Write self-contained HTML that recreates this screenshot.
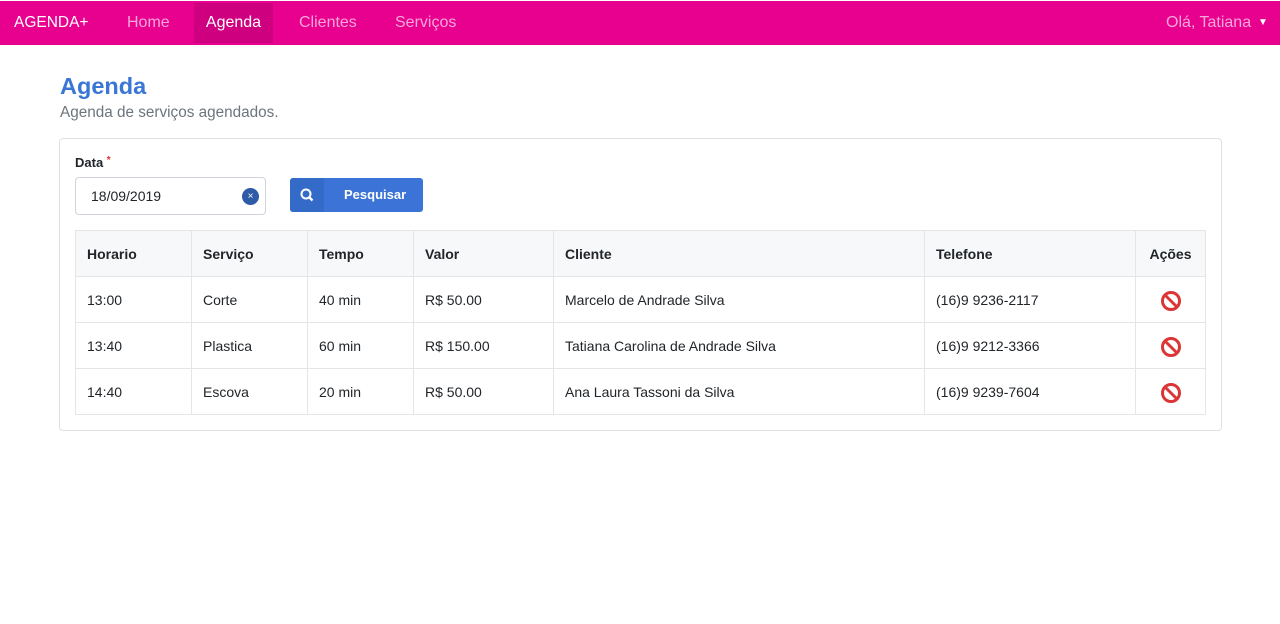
<!DOCTYPE html>
<html><head><meta charset="utf-8"><style>
*{box-sizing:border-box;margin:0;padding:0}
body{width:1280px;height:624px;background:#fff;font-family:"Liberation Sans",sans-serif;position:relative;overflow:hidden;color:#212529}
.nav{position:absolute;top:1px;left:0;width:1280px;height:44px;background:#e8008e}
.nav span{position:absolute;top:0;line-height:44px;font-size:16px;color:#f7a6d8}
.nav .brand{color:#fff;left:14px;font-size:15.5px}
.nav .act{left:194px;width:79px;text-align:center;background:#cf0080;color:#fff;height:40px;top:2px;line-height:40px}
h1{position:absolute;left:60px;top:73px;font-size:23.5px;color:#3a76d6;font-weight:bold}
.sub{position:absolute;left:60px;top:104px;font-size:15.3px;color:#6c757d}
.card{position:absolute;left:59px;top:138px;width:1163px;height:293px;border:1px solid #dfe1e4;border-radius:4px}
.lbl{position:absolute;left:75px;top:155px;font-size:13px;font-weight:bold}
.lbl b{color:#e03030;font-size:10px;vertical-align:top}
.inp{position:absolute;left:75px;top:177px;width:191px;height:38px;border:1px solid #ced4da;border-radius:4px;font-size:14px;line-height:36px;padding-left:15px}
.clr{position:absolute;right:6px;top:10px;width:17px;height:17px;border-radius:50%;background:#2d5ba8;color:#fff;font-size:10px;line-height:17px;text-align:center}
.btn{position:absolute;left:290px;top:178px;width:133px;height:34px;background:#3b74d6;border-radius:3px;color:#fff;font-size:13px;font-weight:bold}
.btn .ic{position:absolute;left:0;top:0;width:34px;height:34px;background:#356bc8;border-radius:3px 0 0 3px}
.btn .t{position:absolute;left:54px;top:0;line-height:34px}
table{position:absolute;left:75px;top:230px;border-collapse:collapse;font-size:14px;width:1131px}
td,th{border:1px solid #e3e5e8;height:46px;padding:0 11px;text-align:left}
th{background:#f7f8f9;font-weight:bold}
.c{text-align:center}
.c svg{display:block;margin:2px auto 0}
</style></head><body>
<div class="nav"><span class="brand">AGENDA+</span><span style="left:127px">Home</span><span class="act">Agenda</span><span style="left:299px">Clientes</span><span style="left:395px">Serviços</span><span style="left:1166px">Olá, Tatiana</span><span style="left:1258px;font-size:10px;color:#fff">▼</span></div>
<h1>Agenda</h1>
<div class="sub">Agenda de serviços agendados.</div>
<div class="card"></div>
<div class="lbl">Data <b>*</b></div>
<div class="inp">18/09/2019<div class="clr">×</div></div>
<div class="btn"><div class="ic"><svg width="34" height="34"><circle cx="16" cy="16" r="4.5" fill="none" stroke="#fff" stroke-width="2"/><path d="M19.5 19.5l3 3" stroke="#fff" stroke-width="2.4"/></svg></div><span class="t">Pesquisar</span></div>
<table>
<tr><th style="width:116px">Horario</th><th style="width:116px">Serviço</th><th style="width:106px">Tempo</th><th style="width:140px">Valor</th><th style="width:371px">Cliente</th><th style="width:211px">Telefone</th><th class="c">Ações</th></tr>
<tr><td>13:00</td><td>Corte</td><td>40 min</td><td>R$ 50.00</td><td>Marcelo de Andrade Silva</td><td>(16)9 9236-2117</td><td class="c"><svg width="22" height="22" viewBox="0 0 22 22"><circle cx="11" cy="11" r="8.5" fill="none" stroke="#dc3535" stroke-width="3"/><path d="M5 5l12 12" stroke="#dc3535" stroke-width="3"/></svg></td></tr>
<tr><td>13:40</td><td>Plastica</td><td>60 min</td><td>R$ 150.00</td><td>Tatiana Carolina de Andrade Silva</td><td>(16)9 9212-3366</td><td class="c"><svg width="22" height="22" viewBox="0 0 22 22"><circle cx="11" cy="11" r="8.5" fill="none" stroke="#dc3535" stroke-width="3"/><path d="M5 5l12 12" stroke="#dc3535" stroke-width="3"/></svg></td></tr>
<tr><td>14:40</td><td>Escova</td><td>20 min</td><td>R$ 50.00</td><td>Ana Laura Tassoni da Silva</td><td>(16)9 9239-7604</td><td class="c"><svg width="22" height="22" viewBox="0 0 22 22"><circle cx="11" cy="11" r="8.5" fill="none" stroke="#dc3535" stroke-width="3"/><path d="M5 5l12 12" stroke="#dc3535" stroke-width="3"/></svg></td></tr>
</table>
</body></html>
